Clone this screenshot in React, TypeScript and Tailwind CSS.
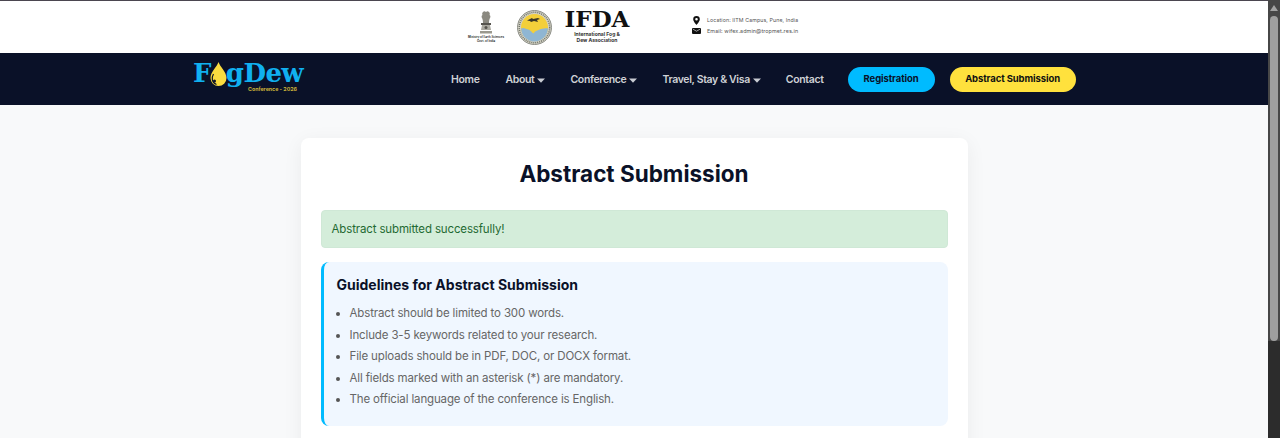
import React from "react";

const font = { fontFamily: "Inter, 'Noto Sans', sans-serif" };

function Caret() {
  return (
    <svg width="8" height="5" viewBox="0 0 8 5" className="mt-[1px]">
      <path d="M0 0.5h8L4 4.7z" fill="#c9ccd3" />
    </svg>
  );
}

function NavItem({ label, caret, className }: { label: string; caret?: boolean; className: string }) {
  return (
    <a className={`flex items-center gap-[3px] pt-[2px] text-[10.500px] font-semibold text-[#cfd1d6] tracking-[-0.35px] whitespace-nowrap ${className}`}>
      {label}
      {caret && <Caret />}
    </a>
  );
}

function Emblem() {
  return (
    <div className="flex flex-col items-center w-[38px]">
      <svg width="18" height="23" viewBox="0 0 18 23">
        <path d="M6 1c1-1 2-.8 3 0 1-.8 2-1 3 0 1 .8 1 2 .5 3 1 .6 1.200 2 .5 3-.7 1.200-1 3-1 5H6c0-2-.3-3.800-1-5-.7-1-.5-2.400.5-3C5 3 5 1.800 6 1z" fill="#8b8980" />
        <path d="M4 12h10v2H4z" fill="#55534d" />
        <path d="M5 14h8l1 5H4z" fill="#aaa89f" />
        <circle cx="9" cy="16.500" r="1.500" fill="#55534d" />
        <path d="M3 20h12v2.500H3z" fill="#9a988f" />
      </svg>
      <span className="text-[2.800px] leading-[4px] font-bold text-[#333] whitespace-nowrap mt-[1px]">Ministry of Earth Sciences</span>
      <span className="text-[2.800px] leading-[4px] font-bold text-[#333] whitespace-nowrap">Govt. of India</span>
    </div>
  );
}

function RoundLogo() {
  return (
    <svg width="35" height="35" viewBox="0 0 35 35">
      <circle cx="17.500" cy="17.500" r="17" fill="#d4d2c4" />
      <circle cx="17.500" cy="17.500" r="17" fill="none" stroke="#8b8d86" strokeWidth="1" />
      <circle cx="17.500" cy="17.500" r="13.500" fill="#f3cf3a" />
      <path d="M4 18.500c3-1.500 5 .5 7.500 1 2 .4 3 3 5 4 1.500-2.500 3.500-3 5-3.500 3-1 6-2 9.500-1.500-.5 7.500-6.500 13-13.500 13S4.500 26 4 18.500z" fill="#8fb6d3" />
      <path d="M10 10.500l5-2.500 1 1 5-1 2 1-3 1 1 2-4-1-3 1-1-1z" fill="#3a3728" />
      <circle cx="17.500" cy="17.500" r="15.200" fill="none" stroke="#70756b" strokeWidth="1.500" strokeDasharray="1 1" />
    </svg>
  );
}

function Drop() {
  return (
    <svg width="17" height="25" viewBox="0 0 17 25" className="mx-[-1px] mt-[3px]">
      <path d="M8.500 0C10 5 16.500 9.500 16.500 16a8 8 0 0 1-16 0C.5 9.500 7 5 8.500 0z" fill="#fbdc3f" />
      <path d="M3.500 12c-2.500 4-1.500 9 3 10.500" fill="none" stroke="#0a1128" strokeWidth="1.200" />
      <circle cx="4.500" cy="19" r="1.500" fill="#0a1128" />
    </svg>
  );
}

function Logo() {
  return (
    <div className="relative w-[112px] h-[34px] mt-[-5px]">
      <div className="flex items-center h-[27px] text-[26px] font-bold text-[#10b0f0] tracking-[-0.6px]" style={{ fontFamily: "'DejaVu Serif', serif" }}>
        <span className="leading-[24px]">F</span>
        <Drop />
        <span className="leading-[24px]">gDew</span>
      </div>
      <span className="absolute left-[55px] top-[27px] text-[5.300px] leading-[5px] font-bold text-[#c9b23a] whitespace-nowrap">Conference - 2026</span>
    </div>
  );
}

const guidelines = [
  "Abstract should be limited to 300 words.",
  "Include 3-5 keywords related to your research.",
  "File uploads should be in PDF, DOC, or DOCX format.",
  "All fields marked with an asterisk (*) are mandatory.",
  "The official language of the conference is English.",
];

export default function App() {
  return (
    <div className="flex h-[438px] w-[1280px] overflow-hidden" style={font}>
      <div className="flex-1 h-full overflow-hidden bg-[#f8f9fa]">
        <header className="h-[53px] bg-white border-t border-[#4b4650] flex items-center">
          <div className="flex items-center ml-[467px]">
            <Emblem />
            <div className="ml-[12px]"><RoundLogo /></div>
            <div className="ml-[12px] flex flex-col items-center w-[66px] mt-[-3px]">
              <span className="text-[23px] leading-[21px] font-bold text-[#111]" style={{ fontFamily: "'DejaVu Serif', serif" }}>IFDA</span>
              <span className="text-[5px] leading-[6px] font-bold text-[#333] mt-[2px] whitespace-nowrap">International Fog &amp;</span>
              <span className="text-[5px] leading-[6px] font-bold text-[#333] whitespace-nowrap">Dew Association</span>
            </div>
            <div className="ml-[62px] flex flex-col gap-[3px] mt-[-3px]">
              <div className="flex items-center gap-[6px] h-[8px]">
                <svg width="7" height="9" viewBox="0 0 7 9" className="mx-[1px]">
                  <path d="M3.500 0A3.300 3.300 0 0 0 .2 3.300C.2 5.500 3.500 9 3.500 9s3.300-3.500 3.300-5.700A3.300 3.300 0 0 0 3.500 0zm0 4.600a1.300 1.300 0 1 1 0-2.600 1.300 1.300 0 0 1 0 2.600z" fill="#111" />
                </svg>
                <span className="text-[5.250px] leading-[8px] text-[#555] tracking-[0.1px] whitespace-nowrap">Location: IITM Campus, Pune, India</span>
              </div>
              <div className="flex items-center gap-[6px] h-[8px]">
                <svg width="9" height="6" viewBox="0 0 9 6">
                  <rect width="9" height="6" rx="1" fill="#111" />
                  <path d="M1 1.200l3.500 2 3.500-2" fill="none" stroke="#fff" strokeWidth=".6" />
                </svg>
                <span className="text-[5.400px] leading-[8px] text-[#555] tracking-[0.1px] whitespace-nowrap">Email: wifex.admin@tropmet.res.in</span>
              </div>
            </div>
          </div>
        </header>

        <nav className="h-[52px] bg-[#0a1128] flex items-center pl-[193px]">
          <Logo />
          <NavItem label="Home" className="ml-[146px]" />
          <NavItem label="About" caret className="ml-[26px]" />
          <NavItem label="Conference" caret className="ml-[25px]" />
          <NavItem label="Travel, Stay & Visa" caret className="ml-[25px]" />
          <NavItem label="Contact" className="ml-[25px]" />
          <a className="ml-[24px] w-[87px] h-[25px] pt-[1px] rounded-full bg-[#00bbff] text-[#0a1128] text-[9.500px] tracking-[-0.1px] font-bold flex items-center justify-center">Registration</a>
          <a className="ml-[15px] w-[126px] h-[25px] pt-[1px] rounded-full bg-[#ffe13d] text-[#111] text-[9.500px] tracking-[-0.1px] font-bold flex items-center justify-center whitespace-nowrap">Abstract Submission</a>
        </nav>

        <main className="pt-[33px] flex justify-center">
          <div className="w-[667px] h-[400px] bg-white rounded-lg shadow-[0_4px_20px_rgba(0,0,0,0.06)] px-[20px] pt-[20px]">
            <h1 className="text-[22.500px] leading-[32px] font-bold text-[#0a1128] text-center">Abstract Submission</h1>
            <div className="mt-[20px] h-[38px] rounded bg-[#d4edda] border border-[#cfe8d6] text-[#1f6a32] text-[11.500px] tracking-[-0.14px] flex items-center pl-[10px] pt-[1px]">
              Abstract submitted successfully!
            </div>
            <div className="mt-[14px] h-[164px] bg-[#f0f7ff] border-l-[3px] border-[#00bbff] rounded-lg pl-[13px] pt-[12px]">
              <h2 className="text-[14px] leading-[22px] font-bold text-[#0a1128]">Guidelines for Abstract Submission</h2>
              <ul className="mt-[7px] list-disc pl-[13px] text-[11.500px] tracking-[-0.14px] leading-[21.500px] text-[#666]">
                {guidelines.map((g) => (
                  <li key={g} className="marker:text-[#555]">{g}</li>
                ))}
              </ul>
            </div>
          </div>
        </main>
      </div>

      <div className="w-[12px] h-full bg-[#2c2c2c] flex flex-col">
        <div className="h-[341px] bg-[#474747] flex flex-col items-center pt-[5px]">
          <svg width="8" height="6" viewBox="0 0 8 6"><path d="M4 0l4 6H0z" fill="#a3a3a3" /></svg>
          <div className="mt-[5px] w-[8px] flex-1 rounded-full bg-[#9f9f9f]" />
        </div>
      </div>
    </div>
  );
}
